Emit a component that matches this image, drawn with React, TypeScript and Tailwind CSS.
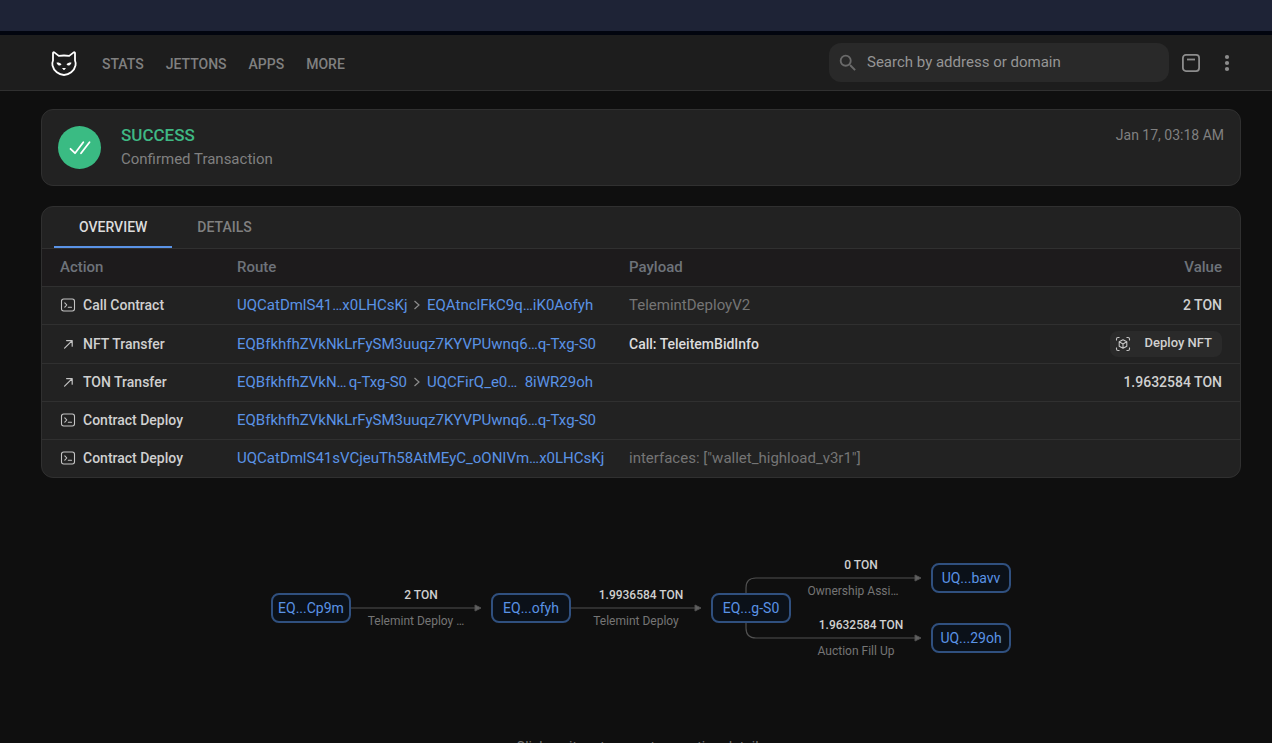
import React from 'react';

type Address = { start: string; end: string };

type Row = {
  icon: 'contract' | 'transfer';
  action: string;
  route: Address[];
  payload?: string;
  call?: string;
  value?: string;
  nft?: string;
};

const NAV = ['STATS', 'JETTONS', 'APPS', 'MORE'];

const ROWS: Row[] = [
  {
    icon: 'contract',
    action: 'Call Contract',
    route: [
      { start: 'UQCatDmlS41…', end: 'x0LHCsKj' },
      { start: 'EQAtnclFkC9q…', end: 'iK0Aofyh' },
    ],
    payload: 'TelemintDeployV2',
    value: '2 TON',
  },
  {
    icon: 'transfer',
    action: 'NFT Transfer',
    route: [{ start: 'EQBfkhfhZVkNkLrFySM3uuqz7KYVPUwnq6…', end: 'q-Txg-S0' }],
    call: 'Call: TeleitemBidInfo',
    nft: 'Deploy NFT',
  },
  {
    icon: 'transfer',
    action: 'TON Transfer',
    route: [
      { start: 'EQBfkhfhZVkN…', end: 'q-Txg-S0' },
      { start: 'UQCFirQ_e0…', end: '8iWR29oh' },
    ],
    value: '1.9632584 TON',
  },
  {
    icon: 'contract',
    action: 'Contract Deploy',
    route: [{ start: 'EQBfkhfhZVkNkLrFySM3uuqz7KYVPUwnq6…', end: 'q-Txg-S0' }],
  },
  {
    icon: 'contract',
    action: 'Contract Deploy',
    route: [{ start: 'UQCatDmlS41sVCjeuTh58AtMEyC_oONIVm…', end: 'x0LHCsKj' }],
    payload: 'interfaces: ["wallet_highload_v3r1"]',
  },
];

function CatLogo() {
  return (
    <svg width="28" height="28" viewBox="0 0 28 28" fill="none">
      <path
        d="M3 4.200C3 3.200 3.800 3 4.600 3.600L8.800 6.900Q14 6.100 19.200 6.900L23.400 3.600C24.200 3 25 3.200 25 4.200L25 11.500C25.600 12.900 25.900 14.500 25.500 16.500C24.300 22 19 26 14 26C9 26 3.700 22 2.500 16.500C2.100 14.500 2.400 12.900 3 11.500Z"
        stroke="#fff"
        strokeWidth="1.800"
        strokeLinejoin="round"
      />
      <path d="M6.600 13.600C8.300 13.300 10.400 14 11.500 15.200C10.800 16.400 9.800 16.800 8.700 16.400C7.500 15.900 6.700 14.900 6.600 13.600Z" fill="#fff" />
      <path d="M21.400 13.600C19.700 13.300 17.600 14 16.500 15.200C17.200 16.400 18.200 16.800 19.300 16.400C20.500 15.900 21.300 14.900 21.400 13.600Z" fill="#fff" />
      <path d="M12 18.900H16L14.600 20.700Q14 21.200 13.400 20.700Z" fill="#fff" />
    </svg>
  );
}

function ContractIcon() {
  return (
    <svg width="16" height="16" viewBox="0 0 16 16" fill="none" stroke="#c4c4c4" strokeWidth="1.100">
      <rect x="1.500" y="2" width="13" height="12" rx="2.200" />
      <path d="M4.800 5.800L6.800 8L4.800 10.200M8.300 10.200H11.500" strokeLinecap="round" strokeLinejoin="round" />
    </svg>
  );
}

function TransferIcon() {
  return (
    <svg width="16" height="16" viewBox="0 0 16 16" fill="none" stroke="#c4c4c4" strokeWidth="1.200">
      <path d="M4.600 12.200L12.200 4.600M6.600 4.600H12.200V10.200" strokeLinecap="round" strokeLinejoin="round" />
    </svg>
  );
}

function NftIcon() {
  return (
    <svg width="16" height="16" viewBox="0 0 16 16" fill="none" stroke="#c4c4c4" strokeWidth="1.100" strokeLinejoin="round">
      <path d="M1.500 4.500V3Q1.500 1.500 3 1.500H4.500M11.500 1.500H13Q14.500 1.500 14.500 3V4.500M14.500 11.500V13Q14.500 14.500 13 14.500H11.500M4.500 14.500H3Q1.500 14.500 1.500 13V11.500" />
      <path d="M8 3.800L11.800 5.800V10.200L8 12.300L4.200 10.200V5.800ZM4.200 5.800L8 7.900L11.800 5.800M8 7.900V12.300" />
    </svg>
  );
}

function Header() {
  return (
    <header className="flex h-14 items-center justify-between border-b border-[#303030] bg-[#1d1d1d] pr-[35px] pl-[50px]">
      <div className="flex items-center gap-6">
        <a href="#" aria-label="Home">
          <CatLogo />
        </a>
        <nav className="flex gap-[22px] pt-0.5 text-sm font-medium text-[#808080]">
          {NAV.map((item) => (
            <a key={item} href="#">
              {item}
            </a>
          ))}
        </nav>
      </div>
      <div className="flex items-center">
        <label className="mr-3 flex h-[39px] w-[340px] items-center gap-2 rounded-xl bg-[#292929] px-2">
          <svg width="22" height="22" viewBox="0 0 24 24" fill="#6a6a6a">
            <path d="M15.500 14h-.79l-.28-.27A6.471 6.471 0 0 0 16 9.500 6.500 6.500 0 1 0 9.500 16c1.610 0 3.090-.59 4.230-1.570l.27.28v.79l5 4.990L20.490 19l-4.990-5zm-6 0C7.010 14 5 11.990 5 9.500S7.010 5 9.500 5 14 7.010 14 9.500 11.990 14 9.500 14z" />
          </svg>
          <input
            type="text"
            aria-label="Search"
            placeholder="Search by address or domain"
            className="min-w-0 flex-1 bg-transparent text-[15px] text-[#c4c4c4] outline-none placeholder:text-[#959595]"
          />
        </label>
        <button aria-label="Wallet" className="mr-4">
          <svg width="20" height="20" viewBox="0 0 20 20" fill="none" stroke="#8c8c8c" strokeWidth="1.800">
            <rect x="1.900" y="1.900" width="16.200" height="16.200" rx="3" />
            <path d="M6 6.500H14" />
          </svg>
        </button>
        <button aria-label="Menu" className="flex w-5 justify-center">
          <svg width="6" height="18" viewBox="0 0 6 18" fill="#8c8c8c">
            <circle cx="3" cy="3" r="2.100" />
            <circle cx="3" cy="9" r="2.100" />
            <circle cx="3" cy="15" r="2.100" />
          </svg>
        </button>
      </div>
    </header>
  );
}

function Status() {
  return (
    <section className="flex items-start rounded-xl border border-[#303030] bg-[#222] p-4">
      <div className="flex h-[43px] w-[43px] items-center justify-center rounded-full bg-[#3abb83]">
        <svg width="22" height="16" viewBox="0 0 22 16" fill="none" stroke="#fff" strokeWidth="1.800">
          <path d="M1.500 8.800L6 13.200L14.300 2.200M12 13.200L20.500 2.200" strokeLinecap="round" strokeLinejoin="round" />
        </svg>
      </div>
      <div className="ml-5 flex-1">
        <h1 className="text-[17px] leading-[19px] font-medium text-[#3fb984]">SUCCESS</h1>
        <p className="mt-1 text-[15px] leading-5 text-[#808080]">Confirmed Transaction</p>
      </div>
      <time className="text-sm leading-[18px] text-[#808080]">Jan 17, 03:18 AM</time>
    </section>
  );
}

function AddressLink({ start, end, className }: Address & { className?: string }) {
  return (
    <a href="#" className={`flex justify-between whitespace-nowrap text-[#5a93e6] ${className ?? ''}`}>
      <span>{start}</span>
      <span>{end}</span>
    </a>
  );
}

function Route({ route }: { route: Address[] }) {
  if (route.length === 1) return <AddressLink {...route[0]} />;
  return (
    <div className="flex items-center justify-between">
      <AddressLink {...route[0]} className="w-[170px]" />
      <svg width="8" height="12" viewBox="0 0 8 12" fill="none" stroke="#8c8c8c" strokeWidth="1.200">
        <path d="M1.500 2L6 6L1.500 10" />
      </svg>
      <AddressLink {...route[1]} className="w-[166px]" />
    </div>
  );
}

function Transactions() {
  return (
    <section className="mt-5 overflow-hidden rounded-xl border border-[#303030] bg-[#222]">
      <div role="tablist" className="flex h-[42px] border-b border-[#303030] px-3 text-sm font-medium">
        <button role="tab" aria-selected="true" className="border-b-2 border-[#5a93e6] px-[25px] text-[#dcdcdc]">
          OVERVIEW
        </button>
        <button role="tab" aria-selected="false" className="border-b-2 border-transparent px-[25px] text-[#808080]">
          DETAILS
        </button>
      </div>
      <table className="w-full table-fixed text-[15px] leading-5">
        <thead>
          <tr className="h-[37px] border-b border-[#303030] bg-[#1d1b1c] text-left text-[#6e737a]">
            <th className="w-[177px] px-[18px] font-medium">Action</th>
            <th className="w-[392px] px-[18px] font-medium">Route</th>
            <th className="px-[18px] font-medium">Payload</th>
            <th className="w-[200px] px-[18px] text-right font-medium">Value</th>
          </tr>
        </thead>
        <tbody className="text-[#d0d0d0]">
          {ROWS.map((row, i) => (
            <tr key={i} className="h-[38px] border-b border-[#303030] last:border-b-0">
              <td className="px-[18px]">
                <div className="flex items-center gap-[7px] text-sm font-medium whitespace-nowrap">
                  {row.icon === 'contract' ? <ContractIcon /> : <TransferIcon />}
                  {row.action}
                </div>
              </td>
              <td className="px-[18px]">
                <Route route={row.route} />
              </td>
              <td className="px-[18px]">
                {row.call && <span className="text-sm font-medium text-[#dcdcdc]">{row.call}</span>}
                {row.payload && <span className="text-[#757575]">{row.payload}</span>}
              </td>
              <td className="px-[18px] text-right text-sm font-medium">
                {row.value}
                {row.nft && (
                  <button className="my-1.5 ml-auto flex h-[26px] items-center gap-[14px] rounded-lg bg-[#2a2a2a] pr-2.5 pl-[5px] text-[13px]">
                    <NftIcon />
                    {row.nft}
                  </button>
                )}
              </td>
            </tr>
          ))}
        </tbody>
      </table>
    </section>
  );
}

const NODES = [
  { label: 'EQ...Cp9m', x: 0, y: 30 },
  { label: 'EQ...ofyh', x: 220, y: 30 },
  { label: 'EQ...g-S0', x: 440, y: 30 },
  { label: 'UQ...bavv', x: 660, y: 0 },
  { label: 'UQ...29oh', x: 660, y: 60 },
];

// x is the middle of the label, y the line it belongs to
const EDGES = [
  { value: '2 TON', name: 'Telemint Deploy …', x: 150, nameX: 145, y: 45 },
  { value: '1.9936584 TON', name: 'Telemint Deploy', x: 370, nameX: 365, y: 45 },
  { value: '0 TON', name: 'Ownership Assi…', x: 590, nameX: 582, y: 15 },
  { value: '1.9632584 TON', name: 'Auction Fill Up', x: 590, nameX: 585, y: 75 },
];

function Graph() {
  return (
    <section className="relative mx-auto mt-[85px] h-[90px] w-[740px]">
      <svg width="740" height="90" viewBox="0 0 740 90" fill="none" stroke="#505050" className="absolute inset-0">
        <path d="M80 45H204M300 45H424M475 30V25Q475 15 485 15H644M475 60V65Q475 75 485 75H644" strokeWidth="1.200" />
        <path d="M204 42L210 45L204 48ZM424 42L430 45L424 48ZM644 12L650 15L644 18ZM644 72L650 75L644 78Z" fill="#606060" />
      </svg>
      {EDGES.map((e) => (
        <React.Fragment key={e.name}>
          <span
            className="absolute -translate-x-1/2 text-xs leading-4 font-medium whitespace-nowrap text-[#d0d0d0]"
            style={{ left: e.x, top: e.y - 21 }}
          >
            {e.value}
          </span>
          <span
            className="absolute -translate-x-1/2 text-xs leading-4 whitespace-nowrap text-[#757575]"
            style={{ left: e.nameX, top: e.y + 5 }}
          >
            {e.name}
          </span>
        </React.Fragment>
      ))}
      {NODES.map((n) => (
        <button
          key={n.label}
          className="absolute flex h-[30px] w-20 items-center justify-center rounded-lg border-2 border-[#30507f] bg-[#0b1119] text-sm text-[#5a93e6]"
          style={{ left: n.x, top: n.y }}
        >
          {n.label}
        </button>
      ))}
    </section>
  );
}

export default function App() {
  return (
    <div className="min-h-screen bg-[#0f0f0f] font-['Roboto','Inter',sans-serif]">
      <div className="h-[35px] border-b-4 border-[#02050f] bg-[#1e2336]" />
      <Header />
      <main className="pt-[18px] pr-[31px] pl-[41px]">
        <Status />
        <Transactions />
        <Graph />
        <p className="mt-20 text-center text-sm leading-7 text-[#757575]">Click on item to open transaction details</p>
      </main>
    </div>
  );
}
